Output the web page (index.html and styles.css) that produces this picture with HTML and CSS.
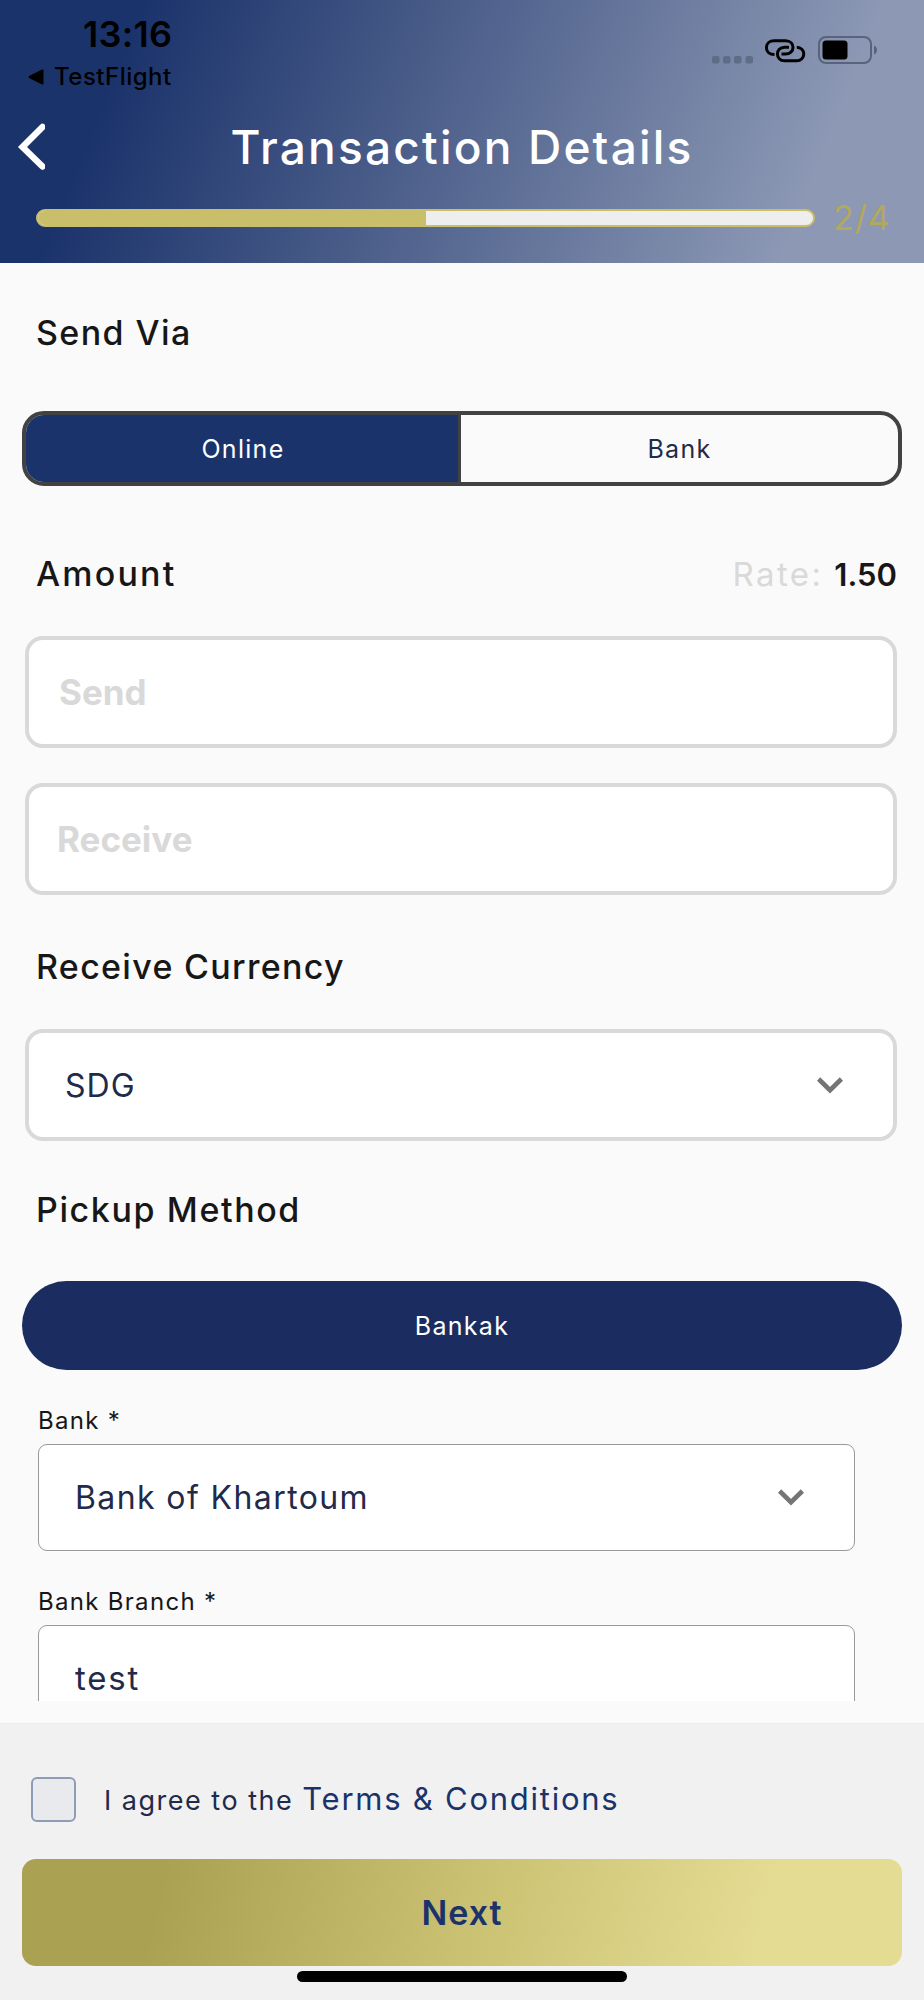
FILE: index.html
```
<!DOCTYPE html>
<html lang="en">
<head>
<meta charset="utf-8">
<title>Transaction Details</title>
<link rel="stylesheet" href="styles.css">
</head>
<body>
<header class="header">
  <div class="status">
    <div class="status-left">
      <div class="time">13:16</div>
      <div class="back-app">
        <svg width="16" height="16" viewBox="0 0 16 16"><path d="M1.5 8 14.500 1.500V14.500Z" stroke="#000" stroke-width="2" stroke-linejoin="round"/></svg>
        <span>TestFlight</span>
      </div>
    </div>
    <div class="status-right">
      <svg class="dots" width="42" height="8" viewBox="0 0 42 8"><g fill="#5f6c85"><rect width="7.500" height="7.500" rx="2.200"/><rect x="11" width="7.500" height="7.500" rx="2.200"/><rect x="22" width="7.500" height="7.500" rx="2.200"/><rect x="33.500" width="7.500" height="7.500" rx="2.200"/></g></svg>
      <svg class="link" width="42" height="26" viewBox="0 0 42 26" fill="none" stroke="#000" stroke-width="3"><path d="M10.500 16.500C5.500 16.500 2.400 13.600 2.400 9.500S5.800 2.700 10 2.700H21.500C26.500 2.700 29 6 29 9.500S26 16 21.500 16H17.500"/><path d="M25 9.200H20.500C16 9.200 13.400 12.500 13.400 16S16 22.800 20.500 22.800H32.500C37 22.800 39.800 19.500 39.800 16S37 9.200 32.800 9.200"/></svg>
      <svg class="battery" width="60" height="28" viewBox="0 0 60 28"><rect x="1" y="1" width="52" height="26" rx="7" fill="none" stroke="#59647c" stroke-width="2"/><rect x="4.500" y="4.500" width="25" height="19" rx="3.500"/><path d="M56 9.500Q59 11 59 14T56 18.500Z" fill="#59647c"/></svg>
    </div>
  </div>
  <div class="title-row">
    <svg class="back" width="28" height="48" viewBox="0 0 28 48"><path d="M25.500 4 5.500 24 25.500 43.500" fill="none" stroke="#fff" stroke-width="6.400" stroke-linecap="round"/></svg>
    <h1 class="title">Transaction Details</h1>
  </div>
  <div class="progress-row">
    <div class="progress"><div class="progress-fill"></div></div>
    <span class="step">2/4</span>
  </div>
</header>
<main class="content">
  <h2 class="heading send-via">Send Via</h2>
  <div class="segment">
    <div class="seg seg-on">Online</div>
    <div class="seg">Bank</div>
  </div>
  <div class="amount-row">
    <h2 class="heading amount">Amount</h2>
    <div class="rate"><span class="rate-label">Rate:</span><span class="rate-value">1.50</span></div>
  </div>
  <div class="field"><span class="ph ph-send">Send</span></div>
  <div class="field second"><span class="ph ph-receive">Receive</span></div>
  <h2 class="heading currency">Receive Currency</h2>
  <div class="field select"><span class="value sdg">SDG</span>
    <svg width="26" height="17" viewBox="0 0 26 17"><path d="M1.600 2 13 13.200 24.400 2" fill="none" stroke="#757575" stroke-width="4.600"/></svg>
  </div>
  <h2 class="heading pickup">Pickup Method</h2>
  <div class="pill">Bankak</div>
  <div class="label">Bank *</div>
  <div class="box"><span class="value khartoum">Bank of Khartoum</span>
    <svg width="26" height="17" viewBox="0 0 26 17"><path d="M1.600 2 13 13.200 24.400 2" fill="none" stroke="#757575" stroke-width="4.600"/></svg>
  </div>
  <div class="label branch">Bank Branch *</div>
  <div class="box"><span class="value test">test</span></div>
</main>
<footer class="footer">
  <div class="agree">
    <span class="check"></span>
    <p class="terms"><span class="agree-text">I agree to the</span><span class="link-text">Terms &amp; Conditions</span></p>
  </div>
  <div class="next"><span>Next</span></div>
  <div class="home"></div>
</footer>
</body>
</html>
```
FILE: styles.css
```
* { box-sizing: border-box; }
body {
  margin: 0;
  width: 924px;
  height: 2000px;
  display: flex;
  flex-direction: column;
  overflow: hidden;
  background: #fafafa;
  font-family: Inter, sans-serif;
  color: #171717;
  white-space: nowrap;
}
h1, h2, p { margin: 0; font-weight: 500; }
svg { display: block; flex: none; }

.header {
  height: 263px;
  flex: none;
  background: linear-gradient(112deg, #1b336b 14%, #8c98b4 86%);
}
.status { height: 92px; display: flex; justify-content: space-between; }
.status-left { padding: 14px 0 0 28px; color: #000; }
.time { padding-left: 55px; font-size: 36px; line-height: 40px; font-weight: 600; letter-spacing: 0.3px; }
.back-app { display: flex; align-items: center; gap: 10px; font-size: 24px; line-height: 45px; font-weight: 500; letter-spacing: 0.5px; }
.status-right { display: flex; align-items: flex-start; padding-right: 46px; }
.dots { margin: 56px 10px 0 0; }
.link { margin: 38px 12px 0 0; }
.battery { margin-top: 36px; }
.title-row { height: 112px; display: grid; grid-template-columns: 28px 1fr 28px; align-items: center; padding: 0 17px; }
.title { margin-top: -2px; color: #fff; text-align: center; font-size: 46px; line-height: 60px; font-weight: 500; letter-spacing: 2.2px; }
.back { margin-top: -2px; }
.progress-row { display: flex; align-items: center; height: 28px; padding-left: 36px; gap: 18px; }
.progress { width: 779px; height: 18px; border: 2px solid #c9bf6b; border-radius: 9px; background: #eee; overflow: hidden; }
.progress-fill { width: 388px; height: 14px; background: #c9bf6b; }
.step { color: #b3a95b; font-size: 34px; line-height: 30px; letter-spacing: 0.9px; }

.content { height: 1438px; flex: none; overflow: hidden; padding: 48px 22px 0; }
.heading { font-size: 34px; line-height: 44px; padding-left: 14px; letter-spacing: 1.4px; }
.segment { margin-top: 56px; height: 75px; display: grid; grid-template-columns: 435px 1fr; border: 4px solid #424242; border-radius: 22px; overflow: hidden; }
.seg { display: flex; align-items: center; justify-content: center; font-size: 25px; color: #222a4a; letter-spacing: 1.3px; }
.seg-on { background: #1b336b; color: #fff; border-right: 3px solid #424242; padding-left: 2px; }
.amount-row { margin-top: 66px; height: 44px; display: flex; justify-content: space-between; padding-right: 5px; }
.amount { letter-spacing: 2.2px; }
.rate { display: flex; gap: 11px; font-size: 33px; line-height: 45px; }
.rate-label { color: #d9d9d9; letter-spacing: 2.4px; }
.rate-value { font-size: 31px; font-weight: 600; }
.field { margin: 40px 5px 0 3px; height: 112px; border: 4px solid #d9d9d9; border-radius: 18px; background: #fff; display: flex; align-items: center; padding: 0 50px 0 30px; }
.field.second { margin-top: 35px; padding-left: 28px; }
.ph { font-size: 35px; font-weight: 700; color: #d9d9d9; }
.currency { margin-top: 50px; letter-spacing: 1.3px; }
.field.select { justify-content: space-between; padding-left: 36px; }
.value { font-size: 32px; color: #222a4a; letter-spacing: 1px; }
.khartoum { letter-spacing: 1.4px; }
.test { font-size: 33px; letter-spacing: 1.8px; margin-top: -2px; }
.pickup { margin-top: 47px; letter-spacing: 1.6px; }
.pill { margin-top: 49px; height: 89px; border-radius: 45px; background: #1b2d60; color: #fff; display: flex; align-items: center; justify-content: center; font-size: 25px; letter-spacing: 1.3px; }
.label { margin-top: 36px; padding-left: 16px; font-size: 24px; line-height: 30px; letter-spacing: 1.3px; }
.box { margin: 8px 47px 0 16px; height: 107px; border: 1px solid #999; border-radius: 9px; background: #fff; display: flex; align-items: center; justify-content: space-between; padding: 0 50px 0 36px; }

.footer { margin-top: 22px; height: 277px; background: #f1f1f1; border-top: 1px solid #eee; padding: 53px 22px 0; }
.agree { display: flex; align-items: center; height: 45px; padding-left: 9px; gap: 28px; }
.check { width: 45px; height: 45px; border: 2px solid #8f9cb8; border-radius: 6px; background: #e8eaed; }
.terms { display: flex; align-items: baseline; gap: 9px; line-height: 45px; font-weight: 400; }
.agree-text { font-size: 27px; color: #222a4a; letter-spacing: 1.5px; }
.link-text { font-size: 31px; color: #1b336b; letter-spacing: 1.75px; }
.next { margin-top: 37px; height: 107px; border-radius: 14px; background: linear-gradient(104deg, #aaa152 16%, #c9c071 50%, #e4dc92 84%); color: #1b336b; display: flex; align-items: center; justify-content: center; font-size: 34px; font-weight: 600; letter-spacing: 1px; }
.home { margin: 5px auto 0; width: 330px; height: 11px; border-radius: 6px; background: #000; }
```
